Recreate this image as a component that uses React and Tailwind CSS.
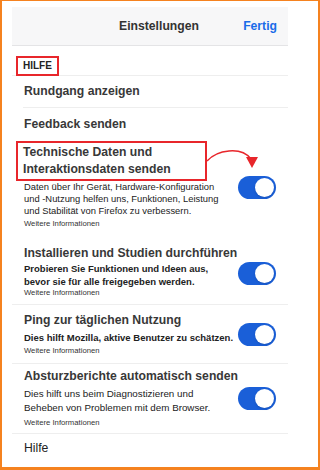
const font = { fontFamily: '"Liberation Sans", Arial, sans-serif' };

function Toggle({ className = "" }) {
  return (
    <div className={`flex h-[23px] w-[38px] shrink-0 items-center justify-end rounded-full bg-[#1a5fd8] pr-[2px] ${className}`}>
      <div className="h-[19px] w-[19px] rounded-full bg-white shadow" />
    </div>
  );
}

function More({ className = "" }) {
  return <p className={`h-[10px] text-[7.7px] leading-[10px] text-[#333] ${className}`}>Weitere Informationen</p>;
}

export default function App() {
  return (
    <div
      style={font}
      className="h-[470px] w-[320px] overflow-hidden border-b-[3px] border-l-2 border-r-2 border-t border-[#f5821f] bg-white"
    >
      <div className="relative ml-[10px] w-[276px] pt-[6px]">
        {/* header */}
        <div className="relative flex h-[39px] items-center justify-center border-b border-[#e4e4e6] bg-[#f7f7f8] pl-[18px]">
          <span className="text-[12.2px] font-bold text-[#333]">Einstellungen</span>
          <span className="absolute right-[11px] text-[12.2px] font-bold text-[#1a6ce8]">Fertig</span>
        </div>

        {/* section label */}
        <div className="h-[30px] border-b border-[#eeeeee] pl-[4px] pt-[6px]">
          <span className="inline-block h-[20px] border-2 border-[#e8262b] px-[5px] text-[10px] font-bold leading-[16px] text-[#222]">
            HILFE
          </span>
        </div>

        <div className="pl-[11px]">
          <div className="flex h-[32px] items-center border-b border-[#eeeeee] pl-[1px]">
            <span className="text-[12.2px] font-bold text-[#383838]">Rundgang anzeigen</span>
          </div>
          <div className="flex h-[33px] items-center pl-[1px]">
            <span className="text-[12.2px] font-bold text-[#383838]">Feedback senden</span>
          </div>
        </div>

        {/* Technische Daten */}
        <div className="pr-[12px]">
          <div className="ml-[4px] h-[40px] w-[191px] border-2 border-[#e8262b] py-[1px] pl-[5px] text-[12.2px] font-bold leading-[17px] text-[#383838]">
            <p>Technische Daten und</p>
            <p>Interaktionsdaten senden</p>
          </div>
          <div className="flex items-start justify-between pl-[12px]">
            <div className="text-[9.4px] leading-[12px] text-[#222]">
              <p>Daten über Ihr Gerät, Hardware-Konfiguration</p>
              <p>und -Nutzung helfen uns, Funktionen, Leistung</p>
              <p>und Stabilität von Firefox zu verbessern.</p>
            </div>
            <Toggle className="-mt-[5px]" />
          </div>
          <More className="mt-[2px] pl-[12px]" />
        </div>

        <svg className="absolute left-[193px] top-[145px]" width="60" height="26" viewBox="0 0 60 26" fill="none">
          <path d="M2 15 C 12 4, 36 0, 46 13" stroke="#e8262b" strokeWidth="1.5" />
          <path d="M41 11 L53 11 L47 22 Z" fill="#e8262b" />
        </svg>

        {/* Installieren */}
        <div className="mt-[16px] border-b border-[#eeeeee] pb-[6px] pl-[12px] pr-[12px]">
          <p className="text-[12.2px] font-bold leading-[17px] text-[#383838]">Installieren und Studien durchführen</p>
          <div className="flex items-center justify-between">
            <div className="text-[9.5px] font-bold leading-[13px] text-[#222]">
              <p>Probieren Sie Funktionen und Ideen aus,</p>
              <p>bevor sie für alle freigegeben werden.</p>
            </div>
            <Toggle className="-mt-[3px]" />
          </div>
          <More />
        </div>

        {/* Ping */}
        <div className="border-b border-[#eeeeee] pb-[7px] pl-[12px] pr-[12px] pt-[7px]">
          <div className="flex items-start justify-between">
            <div>
              <p className="text-[12.2px] font-bold leading-[17px] text-[#383838]">Ping zur täglichen Nutzung</p>
              <p className="mt-[2px] text-[9.5px] font-bold leading-[13px] text-[#222]">
                Dies hilft Mozilla, aktive Benutzer zu schätzen.
              </p>
            </div>
            <Toggle className="mt-[11px]" />
          </div>
          <More />
        </div>

        {/* Absturzberichte */}
        <div className="border-b border-[#eeeeee] pb-[5px] pl-[12px] pr-[12px] pt-[4px]">
          <p className="text-[12.2px] font-bold leading-[17px] text-[#383838]">Absturzberichte automatisch senden</p>
          <div className="mt-[2px] flex items-start justify-between">
            <div className="text-[9.8px] leading-[14px] text-[#222]">
              <p>Dies hilft uns beim Diagnostizieren und</p>
              <p>Beheben von Problemen mit dem Browser.</p>
            </div>
            <Toggle />
          </div>
          <More className="mt-[3px]" />
        </div>

        <div className="flex h-[28px] items-center pl-[12px]">
          <span className="text-[12.2px] text-[#222]">Hilfe</span>
        </div>
      </div>
    </div>
  );
}
